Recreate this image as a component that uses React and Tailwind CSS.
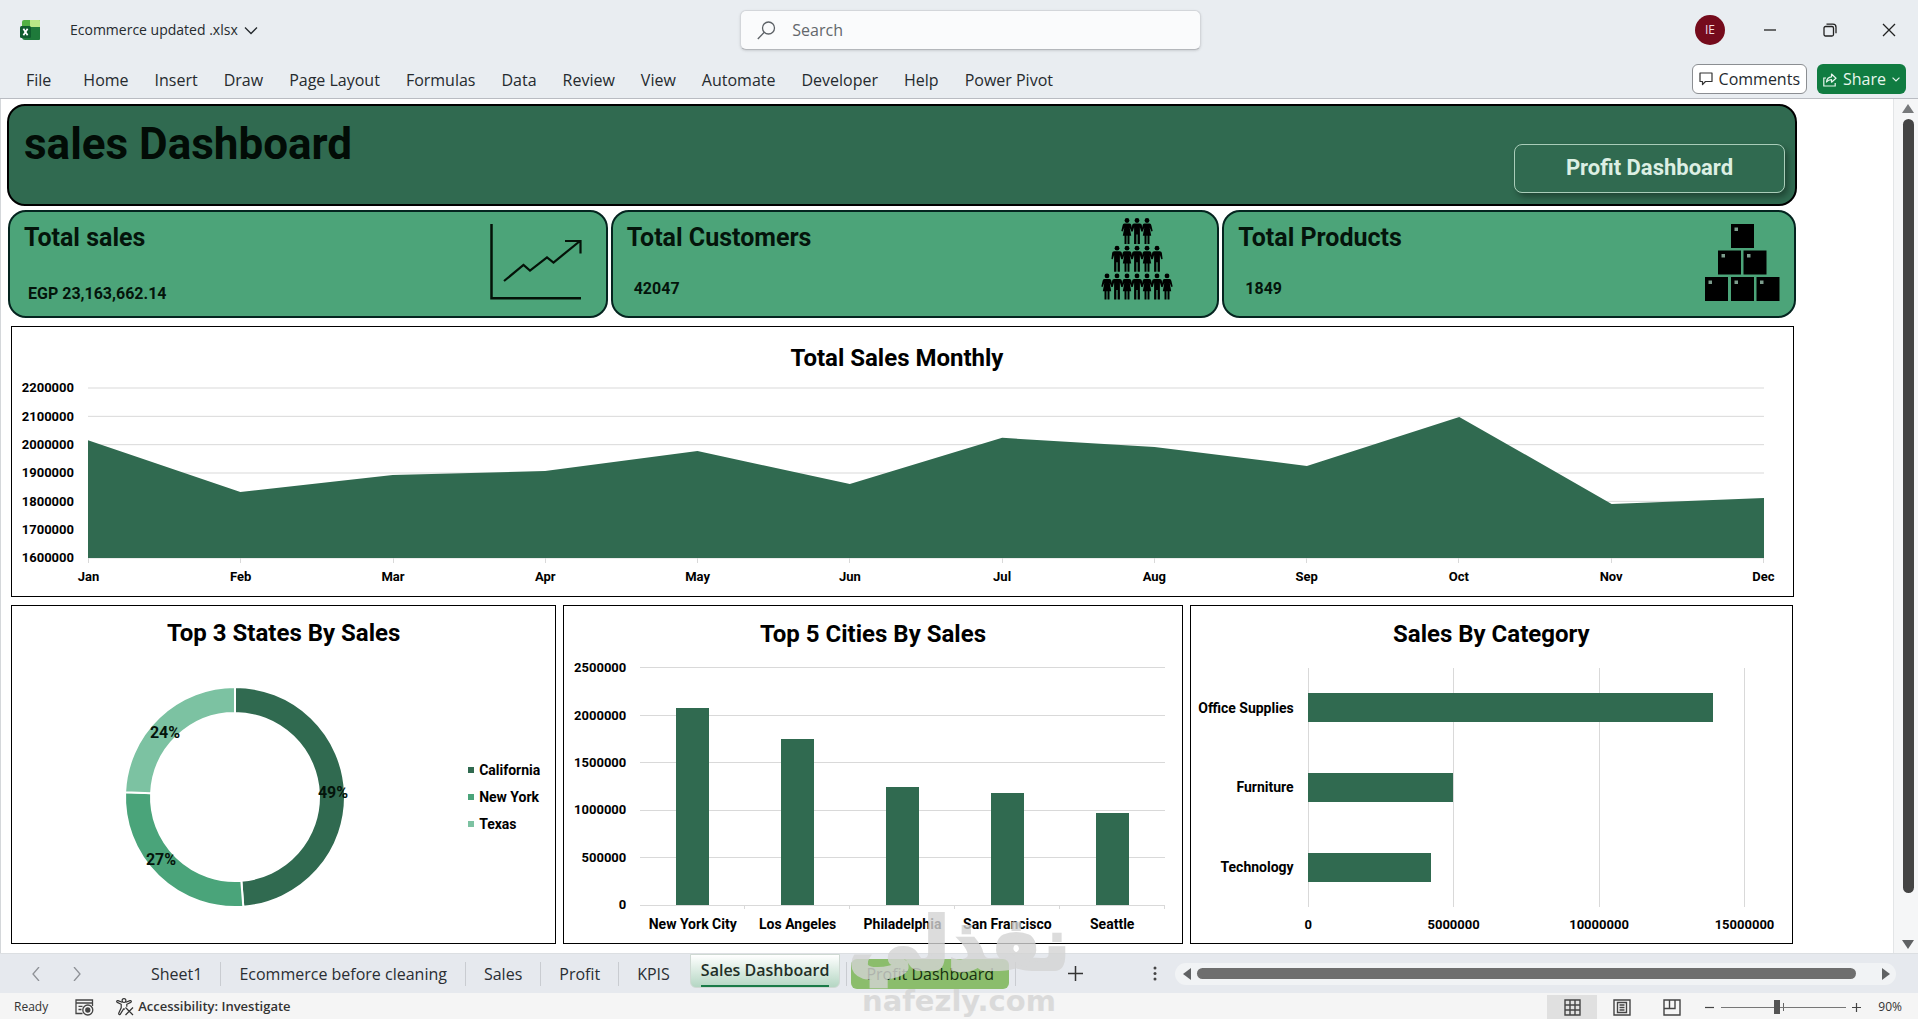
import React from "react";
import clsx from "clsx";

const menuItems = [
  "Home",
  "Insert",
  "Draw",
  "Page Layout",
  "Formulas",
  "Data",
  "Review",
  "View",
  "Automate",
  "Developer",
  "Help",
  "Power Pivot",
];

const monthlySales = [
  { month: "Jan", value: 2016000 },
  { month: "Feb", value: 1833000 },
  { month: "Mar", value: 1893000 },
  { month: "Apr", value: 1907000 },
  { month: "May", value: 1978000 },
  { month: "Jun", value: 1861000 },
  { month: "Jul", value: 2024000 },
  { month: "Aug", value: 1992000 },
  { month: "Sep", value: 1925000 },
  { month: "Oct", value: 2098000 },
  { month: "Nov", value: 1791000 },
  { month: "Dec", value: 1812000 },
];

const states = [
  { name: "California", share: 48.8, color: "#306a50", label: "49%", x: 208, y: 105 },
  { name: "New York", share: 26.9, color: "#4aa47a", label: "27%", x: 36, y: 172 },
  { name: "Texas", share: 24.3, color: "#7cc2a2", label: "24%", x: 40, y: 45 },
];

const cities = [
  { name: "New York City", value: 2080000 },
  { name: "Los Angeles", value: 1755000 },
  { name: "Philadelphia", value: 1248000 },
  { name: "San Francisco", value: 1185000 },
  { name: "Seattle", value: 974000 },
];

const categories = [
  { name: "Office Supplies", value: 13920000 },
  { name: "Furniture", value: 5000000 },
  { name: "Technology", value: 4220000 },
];

const sheetTabs = ["Sheet1", "Ecommerce before cleaning", "Sales", "Profit", "KPIS"];

/* ---------- icons ---------- */

const ExcelLogo = () => (
  <svg width="20" height="20" viewBox="0 0 20 20" aria-hidden="true">
    <path d="M4 0h15a1 1 0 0 1 1 1v6H2V2a2 2 0 0 1 2-2z" fill="#52b043" />
    <path d="M10 0h9a1 1 0 0 1 1 1v6H10z" fill="#b8e986" />
    <path d="M2 7h18v12a1 1 0 0 1-1 1H5a3 3 0 0 1-3-3z" fill="#1e7a3a" />
    <rect x="0" y="6" width="11" height="12" rx="1.5" fill="#0f5c2e" />
    <path d="M3.4 8.8l4.2 6.4M7.6 8.8l-4.2 6.4" stroke="#fff" strokeWidth="1.7" />
  </svg>
);

const Chevron = ({ d, className, width = 14, height = 14 }) => (
  <svg width={width} height={height} viewBox="0 0 14 14" fill="none" stroke="currentColor" strokeWidth="1.3" className={className} aria-hidden="true">
    <path d={d} />
  </svg>
);

const Person = ({ x, y, skirt }) => (
  <g transform={`translate(${x} ${y})`}>
    <circle cx="5.5" cy="2.5" r="2.4" />
    {skirt ? (
      <path d="M3 5.6h5c1.2 0 1.6.8 1.9 2l1.3 5.4-1.3.5-1.7-4 1.5 8.3H8V26H6v-8.200H5V26H3v-8.200H1.300l1.500-8.300-1.700 4-1.300-.5L1.100 7.600c.3-1.200.7-2 1.900-2z" />
    ) : (
      <path d="M2.800 5.600h5.400c1.400 0 2 .8 2.200 2l.7 5.600-1.300.4-1.400-4.400V26H6.100v-9.500H4.900V26H2.600V9.200l-1.400 4.400-1.300-.4.700-5.600c.2-1.200.8-2 2.200-2z" />
    )}
  </g>
);

const PeopleIcon = () => (
  <svg width="72" height="82" viewBox="0 0 72 82" fill="#000" aria-hidden="true">
    {[0, 1, 2].map((i) => (
      <Person key={i} x={20.5 + i * 10} y={0} skirt={i !== 1} />
    ))}
    {[0, 1, 2, 3, 4].map((i) => (
      <Person key={i} x={10.5 + i * 10} y={27.7} skirt={i % 2 === 1} />
    ))}
    {[0, 1, 2, 3, 4, 5, 6].map((i) => (
      <Person key={i} x={0.5 + i * 10} y={55.4} skirt={i % 2 === 0} />
    ))}
  </svg>
);

const TrendIcon = () => (
  <svg width="92" height="76" viewBox="0 0 92 76" fill="none" stroke="#041208" aria-hidden="true">
    <path d="M1.500 0v74.300H91" strokeWidth="2.500" />
    <path d="M14 57l19.500-16 6.500 5.500L57 33.500l6.500 5L90 17M75 17h15.500v12.500" strokeWidth="2.200" />
  </svg>
);

const BoxesIcon = () => {
  const boxes = [
    [26, 0],
    [13, 26.5],
    [38.5, 26.5],
    [0, 53],
    [26, 53],
    [51.5, 53],
  ];
  return (
    <svg width="75" height="77" viewBox="0 0 75 77" aria-hidden="true">
      {boxes.map(([x, y]) => (
        <g key={`${x}-${y}`}>
          <rect x={x} y={y} width="23" height="24" fill="#000" />
          <rect x={x + 3.5} y={y + 3.5} width="3.5" height="3.5" fill="#7c9c8c" />
        </g>
      ))}
    </svg>
  );
};

/* ---------- header ---------- */

const Header = () => (
  <header className="bg-[#e9edf1] border-b border-[#b9bcc2] text-[#252a2e]">
    <div className="flex items-center h-[60px]">
      <div className="flex items-center w-[38.6%] pl-5">
        <ExcelLogo />
        <button className="flex items-center gap-1.5 ml-[30px] text-sm leading-5 whitespace-nowrap">
          Ecommerce updated .xlsx
          <Chevron d="M1 4.500l6 6 6-6" />
        </button>
      </div>
      <label className="flex items-center gap-4 w-[24%] h-10 px-4 bg-[#fafbfc] rounded-md border border-[#d3d6da] border-b-[#b4b7bb] shadow-sm">
        <svg width="19" height="19" viewBox="0 0 19 19" fill="none" stroke="#5c6166" strokeWidth="1.3" aria-hidden="true">
          <circle cx="11.500" cy="7" r="6" />
          <path d="M7.300 11.300L.8 18" />
        </svg>
        <input type="text" aria-label="Search" placeholder="Search" className="flex-1 min-w-0 bg-transparent text-base outline-none placeholder:text-[#63676b]" />
      </label>
      <div className="flex items-center ml-auto">
        <div className="w-[60px] flex justify-center">
          <button className="size-[30px] rounded-full bg-[#750b1c] text-[#f3dfe2] text-xs">IE</button>
        </div>
        <button aria-label="Minimize" className="w-[60px] flex justify-center">
          <svg width="14" height="14" viewBox="0 0 14 14" stroke="#222" strokeWidth="1.3"><path d="M1 7h12" /></svg>
        </button>
        <button aria-label="Restore" className="w-[60px] flex justify-center">
          <svg width="14" height="14" viewBox="0 0 14 14" fill="none" stroke="#222" strokeWidth="1.3">
            <rect x="1" y="3.500" width="9.500" height="9.500" rx="1.500" />
            <path d="M3.500 1.200H10a3 3 0 0 1 3 3v6" />
          </svg>
        </button>
        <button aria-label="Close" className="w-[58px] flex justify-center">
          <svg width="14" height="14" viewBox="0 0 14 14" stroke="#222" strokeWidth="1.3"><path d="M1 1l12 12M13 1L1 13" /></svg>
        </button>
      </div>
    </div>

    <div className="flex items-center h-[38px] pl-[26px] pr-3 text-base">
      <a href="#file" className="mt-0.5 mr-8">File</a>
      <nav className="flex gap-[26px] mt-0.5 whitespace-nowrap">
        {menuItems.map((item) => (
          <a key={item} href="#ribbon">{item}</a>
        ))}
      </nav>
      <button className="flex items-center gap-1.5 h-[30px] px-1.5 ml-auto bg-white border border-[#8b8e92] rounded-md text-base">
        <svg width="14" height="14" viewBox="0 0 14 14" fill="none" stroke="#333" strokeWidth="1.2" aria-hidden="true">
          <path d="M1 1h12v8.500H6.500L3.500 12.500v-3H1z" strokeLinejoin="round" />
        </svg>
        Comments
      </button>
      <button className="flex items-center gap-1.5 h-[30px] px-1.5 ml-2.5 bg-[#107c41] text-[#e8f6ee] rounded-md text-base">
        <svg width="14" height="15" viewBox="0 0 14 15" fill="none" stroke="currentColor" strokeWidth="1.2" aria-hidden="true">
          <path d="M3 6H.8v8h11.400v-3" />
          <path d="M3.500 10c.4-3.500 2.300-5 5-5.200V2L13 6.300 8.500 10.200V7.600C6.300 7.600 4.800 8.300 3.500 10z" strokeLinejoin="round" />
        </svg>
        Share
        <Chevron d="M1 4.500l6 6 6-6" width={8} height={8} className="stroke-2" />
      </button>
    </div>
  </header>
);

/* ---------- dashboard ---------- */

const KpiCard = ({ title, value, icon, className, valueClass = "mt-[27px] ml-[7px]" }) => (
  <section className={clsx("flex justify-between h-[108px] pl-[14px] bg-[#4ca479] border-2 border-[#04241f] rounded-[18px]", className)}>
    <div className="pt-3 whitespace-nowrap">
      <h2 className="text-[25px] leading-7 font-bold text-[#04140b]">{title}</h2>
      <p className={clsx("text-base leading-5 font-bold text-[#04140b]", valueClass)}>{value}</p>
    </div>
    {icon}
  </section>
);

const AxisLabels = ({ values, className }) => (
  <div className={clsx("flex flex-col justify-between items-end text-[13px]", className)}>
    {values.map((v) => (
      <span key={v} className="h-0 flex items-center">{v}</span>
    ))}
  </div>
);

const MonthlyChart = () => {
  const min = 1600000;
  const max = 2200000;
  const step = 1100 / (monthlySales.length - 1);
  const points = monthlySales.map((m, i) => `${i * step},${((max - m.value) / (max - min)) * 600}`);

  return (
    <section className="h-[271px] ml-1 mr-[3px] border border-black bg-white font-bold">
      <h2 className="flex items-center justify-center h-[61px] pt-px pr-[11px] text-2xl">Total Sales Monthly</h2>
      <div className="flex pr-[29px]">
        <AxisLabels values={[2200000, 2100000, 2000000, 1900000, 1800000, 1700000, 1600000]} className="w-[62px] h-[170px] mr-[14px]" />
        <div className="flex-1">
          <svg viewBox="0 0 1100 600" preserveAspectRatio="none" className="block w-full h-[170px] overflow-visible">
            {[0, 100, 200, 300, 400, 500, 600].map((y) => (
              <line key={y} x1="0" x2="1100" y1={y} y2={y} stroke="#d9d9d9" vectorEffect="non-scaling-stroke" />
            ))}
            <polygon points={`0,600 ${points.join(" ")} 1100,600`} fill="#306a50" />
          </svg>
          <div className="flex justify-between">
            {monthlySales.map((m) => (
              <span key={m.month} className="w-px flex flex-col items-center text-[13px] leading-5">
                <i className="w-px h-[5px] mb-1 bg-[#d9d9d9]" />
                {m.month}
              </span>
            ))}
          </div>
        </div>
      </div>
    </section>
  );
};

const polar = (pct, r) => {
  const a = (pct / 100) * Math.PI * 2;
  return `${110 + r * Math.sin(a)} ${110 - r * Math.cos(a)}`;
};

const slicePath = (from, to) =>
  `M${polar(from, 110)}A110 110 0 0 1 ${polar(to, 110)}L${polar(to, 84)}A84 84 0 0 0 ${polar(from, 84)}Z`;

const StatesChart = () => {
  let total = 0;
  const slices = states.map((s) => {
    const from = total;
    total += s.share;
    return { ...s, d: slicePath(from, total) };
  });

  return (
    <section className="h-[339px] border border-black bg-white font-bold">
      <h2 className="flex items-center justify-center h-[54px] text-2xl">Top 3 States By Sales</h2>
      <div className="flex items-center justify-between pt-[27px] pl-[113px] pr-[15px]">
        <svg width="220" height="220" viewBox="0 0 220 220" className="overflow-visible">
          {slices.map((s) => (
            <path key={s.name} d={s.d} fill={s.color} stroke="#fff" strokeWidth="2" />
          ))}
          {slices.map((s) => (
            <text key={s.name} x={s.x} y={s.y + 6} textAnchor="middle" fontSize="16" fill="#04140b">{s.label}</text>
          ))}
        </svg>
        <ul className="flex flex-col gap-[7px] text-sm leading-5">
          {states.map((s) => (
            <li key={s.name} className="flex items-center gap-[5px]">
              <span className="size-1.5" style={{ backgroundColor: s.color }} />
              {s.name}
            </li>
          ))}
        </ul>
      </div>
    </section>
  );
};

const CitiesChart = () => (
  <section className="h-[339px] border border-black bg-white font-bold">
    <h2 className="flex items-center justify-center h-[54px] pt-px text-2xl">Top 5 Cities By Sales</h2>
    <div className="flex pt-2 pr-[17px]">
      <AxisLabels values={[2500000, 2000000, 1500000, 1000000, 500000, 0]} className="w-[62px] h-[237px] mr-[14px]" />
      <div className="flex-1">
        <div className="grid h-[237px]">
          <div className="col-start-1 row-start-1 flex flex-col justify-between -my-px">
            {[0, 1, 2, 3, 4, 5].map((i) => (
              <i key={i} className="h-px bg-[#d9d9d9]" />
            ))}
          </div>
          <div className="col-start-1 row-start-1 grid grid-cols-5">
            {cities.map((c) => (
              <div key={c.name} className="flex items-end justify-center">
                <div className="w-[33px] bg-[#306a50]" style={{ height: `${c.value / 25000}%` }} />
              </div>
            ))}
          </div>
        </div>
        <div className="grid grid-cols-5 text-center text-sm leading-5 whitespace-nowrap">
          {cities.map((c) => (
            <div key={c.name}>
              <div className="h-1 mb-[5px] border-r border-[#d9d9d9]" />
              {c.name}
            </div>
          ))}
        </div>
      </div>
    </div>
  </section>
);

const CategoryChart = () => (
  <section className="h-[339px] border border-black bg-white font-bold">
    <h2 className="flex items-center justify-center h-[54px] pt-px text-2xl">Sales By Category</h2>
    <div className="flex pt-2 pr-[47px]">
      <div className="grid grid-rows-3 items-center justify-items-end w-[103px] h-[239px] mr-[14px] text-sm whitespace-nowrap">
        {categories.map((c) => (
          <span key={c.name}>{c.name}</span>
        ))}
      </div>
      <div className="flex-1">
        <div className="grid h-[239px]">
          <div className="col-start-1 row-start-1 flex justify-between">
            {[0, 1, 2, 3].map((i) => (
              <i key={i} className="w-px bg-[#d9d9d9]" />
            ))}
          </div>
          <div className="col-start-1 row-start-1 grid grid-rows-3 items-center">
            {categories.map((c) => (
              <div key={c.name} className="h-[29px] bg-[#306a50]" style={{ width: `${c.value / 150000}%` }} />
            ))}
          </div>
        </div>
        <div className="flex justify-between mt-2 text-[13px] leading-5">
          {["0", "5000000", "10000000", "15000000"].map((v) => (
            <span key={v} className="w-px flex justify-center">{v}</span>
          ))}
        </div>
      </div>
    </div>
  </section>
);

const Dashboard = () => (
  <main className="flex-1 min-w-0 flex flex-col gap-2 pt-[5px] pb-[9px] pl-1.5 pr-24 border-l border-[#d4d7da] bg-white text-black font-[Roboto,sans-serif]">
    <div className="flex flex-col gap-1">
      <div className="flex justify-between h-[102px] pl-[15px] pr-2.5 bg-[#306a50] border-2 border-black rounded-[18px]">
        <h1 className="mt-2.5 text-[44px] leading-[56px] font-bold text-[#020c06]">sales Dashboard</h1>
        <button className="self-end w-[271px] h-[49px] pb-0.5 mb-[11px] border border-[#a9cdb9] rounded-lg text-[22px] font-bold text-[#dcefe3] shadow-[3px_4px_6px_rgba(0,0,0,0.35)]">
          Profit Dashboard
        </button>
      </div>
      <div className="grid grid-cols-[600fr_609fr_574fr] gap-[3px] mx-px">
        <KpiCard title="Total sales" value="EGP 23,163,662.14" icon={<div className="pt-3"><TrendIcon /></div>} className="pr-6" valueClass="mt-8 ml-1" />
        <KpiCard title="Total Customers" value="42047" icon={<div className="pt-1.5"><PeopleIcon /></div>} className="pr-11" />
        <KpiCard title="Total Products" value="1849" icon={<div className="pt-3"><BoxesIcon /></div>} className="pr-[14px]" />
      </div>
    </div>
    <MonthlyChart />
    <div className="grid grid-cols-[545fr_619fr_603fr] gap-[7px] mx-1">
      <StatesChart />
      <CitiesChart />
      <CategoryChart />
    </div>
  </main>
);

const VerticalScrollbar = () => (
  <div className="w-[25px] flex flex-col items-center gap-1.5 pt-[5px] pb-1 pl-2 pr-1 bg-[#f5f6f7] border-l border-[#e3e5e7]">
    <svg width="12" height="9" viewBox="0 0 12 9" fill="#77797b"><path d="M6 0l6 9H0z" /></svg>
    <div className="flex-1 w-[11px]">
      <div className="h-[95%] rounded-full bg-[#444]" />
    </div>
    <svg width="12" height="9" viewBox="0 0 12 9" fill="#606264"><path d="M0 0h12L6 9z" /></svg>
  </div>
);

/* ---------- footer ---------- */

const Divider = () => <i className="w-px h-6 bg-[#c9ccd1]" />;

const SheetTabs = () => (
  <div className="flex items-center h-10 bg-[#e6e9ee] border-t border-[#dcdfe2] text-[#2a2e33] text-base whitespace-nowrap">
    <button aria-label="Previous sheet" className="ml-[29px] text-[#8e9196]"><Chevron d="M10 0L4 7l6 7" /></button>
    <button aria-label="Next sheet" className="ml-[27px] mr-[49px] text-[#8e9196]"><Chevron d="M4 0l6 7-6 7" /></button>
    {sheetTabs.map((tab) => (
      <React.Fragment key={tab}>
        <button className="px-[18px]">{tab}</button>
        {tab !== "KPIS" && <Divider />}
      </React.Fragment>
    ))}
    <button className="self-start h-[34px] px-2.5 ml-0.5 rounded-b-md border border-[#cfd9d3] bg-linear-to-b from-white to-[#b4d6c3] font-semibold">
      <span className="block h-[31px] leading-7 border-b-2 border-[#1a7a48] text-[#1f2f27]">Sales Dashboard</span>
    </button>
    <i className="w-px h-6 ml-1.5 mr-1 bg-[#c9ccd1]" />
    <button className="h-[30px] px-[15px] rounded-md bg-[#8bbd6c] text-[#16300f]">Profit Dashboard</button>
    <i className="w-px h-6 ml-1.5 bg-[#c9ccd1]" />
    <div className="flex-1 flex items-center justify-between">
      <button aria-label="New sheet" className="ml-[52px]">
        <svg width="15" height="15" viewBox="0 0 15 15" stroke="#333" strokeWidth="1.5"><path d="M7.500 0v15M0 7.500h15" /></svg>
      </button>
      <button aria-label="Tab options" className="mr-[18px]">
        <svg width="4" height="15" viewBox="0 0 4 15" fill="#444"><circle cx="2" cy="2" r="1.500" /><circle cx="2" cy="7.500" r="1.500" /><circle cx="2" cy="13" r="1.500" /></svg>
      </button>
    </div>
    <div className="flex items-center w-[37.6%] h-[22px] gap-1.5 pl-2 pr-1.5 mr-[22px] rounded-full bg-[#f1f3f5]">
      <svg width="8" height="12" viewBox="0 0 8 12" fill="#606264"><path d="M8 0v12L0 6z" /></svg>
      <div className="flex-1">
        <div className="w-[97%] h-[11px] rounded-full bg-[#6e6e6e]" />
      </div>
      <svg width="8" height="12" viewBox="0 0 8 12" fill="#606264"><path d="M0 0v12l8-6z" /></svg>
    </div>
  </div>
);

const StatusBar = () => (
  <footer className="flex items-center h-[26px] pt-0.5 pl-[14px] pr-4 bg-[#f5f5f5] text-[#333] text-xs">
    <span>Ready</span>
    <button aria-label="Macro recording" className="ml-[27px]">
      <svg width="19" height="17" viewBox="0 0 19 17" fill="none" stroke="#444" strokeWidth="1.3">
        <path d="M7.500 14.500H1V1h16.500v6M1 4h16.500M3.500 7.300h4M3.500 10.500h3" />
        <circle cx="12.800" cy="11" r="5" />
        <circle cx="12.800" cy="11" r="2" fill="#444" />
      </svg>
    </button>
    <button className="flex items-center gap-1 ml-[22px] text-[13px] font-semibold">
      <svg width="18" height="18" viewBox="0 0 18 18" fill="none" stroke="#333" strokeWidth="1.2" aria-hidden="true">
        <circle cx="8" cy="2.600" r="1.900" />
        <path d="M6.200 4.300L2 2.600c-1.300-.4-1.800 1.200-.7 1.800L5.200 6.300v3.500l-2.400 5.300c-.5 1.300 1.100 2 1.700.8L7.600 11l1.300.2M9.800 4.300L14 2.600c1.300-.4 1.800 1.200.7 1.800l-3.900 1.900v2.500" />
        <path d="M9.500 9.500l7.500 7.500M17 9.500L9.500 17" />
      </svg>
      Accessibility: Investigate
    </button>
    <div className="flex items-center h-full ml-auto">
      <button aria-label="Normal view" className="flex items-center justify-center w-[50px] h-full bg-[#e0e0e0]">
        <svg width="17" height="17" viewBox="0 0 17 17" fill="none" stroke="#444" strokeWidth="1.4"><path d="M1 1h15v15H1zM6 1v15M11 1v15M1 6h15M1 11h15" /></svg>
      </button>
      <button aria-label="Page layout view" className="flex items-center justify-center w-[50px] h-full">
        <svg width="18" height="17" viewBox="0 0 18 17" fill="none" stroke="#444" strokeWidth="1.4"><path d="M1 1h16v15H1zM4.500 3.500h9v10h-9zM6.500 6h5M6.500 8.500h5M6.500 11h5" /></svg>
      </button>
      <button aria-label="Page break view" className="flex items-center justify-center w-[50px] h-full">
        <svg width="18" height="17" viewBox="0 0 18 17" fill="none" stroke="#444" strokeWidth="1.4"><path d="M1 1h16v15H1zM1 9.500h11V1M6.500 1v8.500" /></svg>
      </button>
      <button aria-label="Zoom out" className="ml-2">
        <svg width="9" height="9" viewBox="0 0 9 9" stroke="#444" strokeWidth="1.2"><path d="M0 4.500h9" /></svg>
      </button>
      <div className="relative flex items-center w-[125px] ml-[7px]">
        <i className="absolute left-[62px] w-px h-2 bg-[#666]" />
        <input
          type="range"
          aria-label="Zoom"
          min="10"
          max="190"
          defaultValue="90"
          className="relative w-full h-px appearance-none bg-[#777] [&::-webkit-slider-thumb]:appearance-none [&::-webkit-slider-thumb]:w-1.5 [&::-webkit-slider-thumb]:h-[14px] [&::-webkit-slider-thumb]:bg-[#555]"
        />
      </div>
      <button aria-label="Zoom in" className="ml-[6px]">
        <svg width="9" height="9" viewBox="0 0 9 9" stroke="#444" strokeWidth="1.2"><path d="M0 4.500h9M4.500 0v9" /></svg>
      </button>
      <span className="ml-[17px]">90%</span>
    </div>
  </footer>
);

const Watermark = () => (
  <div className="absolute bottom-0 left-1/2 -translate-x-1/2 flex flex-col items-center text-[#d4d4d4] opacity-80 font-bold font-['DejaVu_Sans',sans-serif] pointer-events-none whitespace-nowrap">
    <span lang="ar" dir="rtl" className="text-[72px] leading-[78px] [-webkit-text-stroke:4px_#d4d4d4]">نفذلي</span>
    <span className="text-[29px] leading-9">nafezly.com</span>
  </div>
);

const App = () => (
  <div className="relative flex flex-col min-h-screen overflow-hidden font-['Open_Sans',sans-serif]">
    <Header />
    <div className="flex flex-1">
      <Dashboard />
      <VerticalScrollbar />
    </div>
    <SheetTabs />
    <StatusBar />
    <Watermark />
  </div>
);

export default App;
